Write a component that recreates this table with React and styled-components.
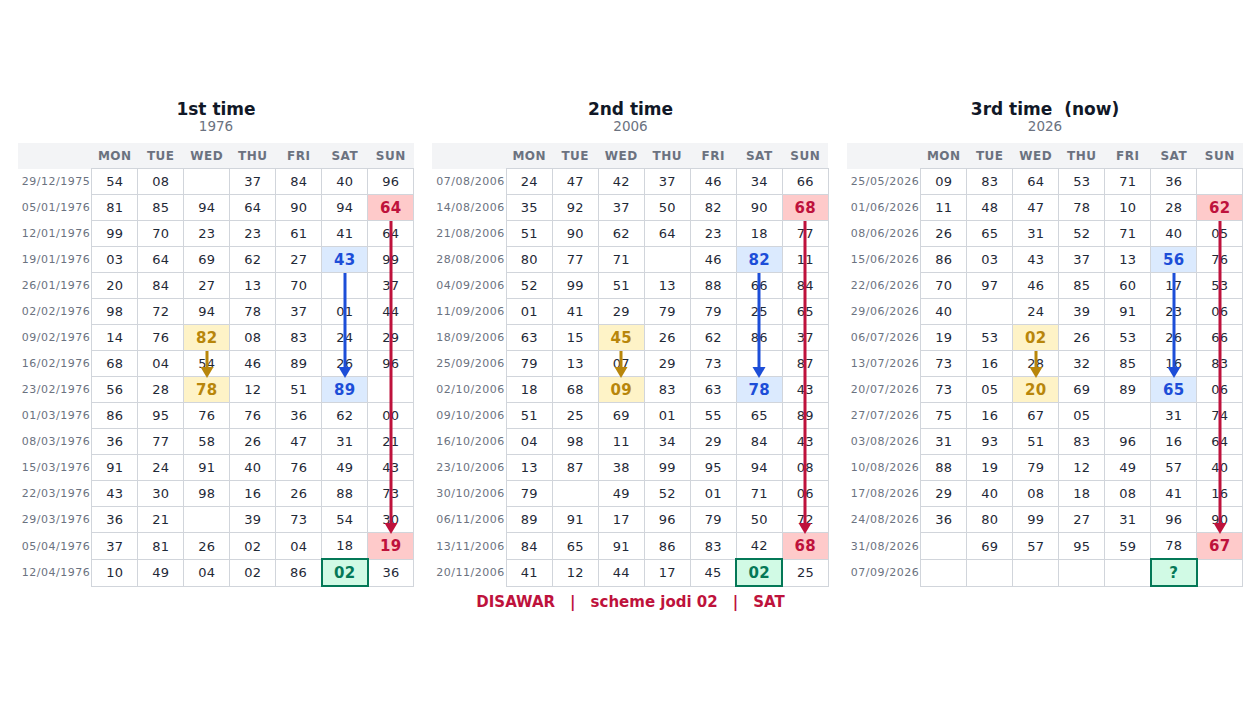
import React from "react";
import styled, { createGlobalStyle } from "styled-components";

const GlobalStyle = createGlobalStyle`
  html, body {
    margin: 0;
    padding: 0;
    background: #ffffff;
    font-family: "DejaVu Sans", "Liberation Sans", sans-serif;
  }
`;

const DAYS = ["MON", "TUE", "WED", "THU", "FRI", "SAT", "SUN"];

const COLORS = {
  red: { bg: "#fecaca", fg: "#be123c", line: "#be123c" },
  blue: { bg: "#dbeafe", fg: "#1d4ed8", line: "#1d4ed8" },
  yellow: { bg: "#fef3c7", fg: "#b8860b", line: "#b8860b" },
  green: { bg: "#d1fae5", fg: "#047857", line: "#047857" },
};

// same cells are marked on all three charts
const MARKS = {
  "1-6": "red",
  "14-6": "red",
  "3-5": "blue",
  "8-5": "blue",
  "6-2": "yellow",
  "8-2": "yellow",
  "15-5": "green",
};

const ARROWS = [
  { col: 6, from: 1, to: 14, color: "red" },
  { col: 5, from: 3, to: 8, color: "blue" },
  { col: 2, from: 6, to: 8, color: "yellow" },
];

const charts = [
  {
    title: "1st time",
    year: "1976",
    rows: [
      ["29/12/1975", "54 08 _ 37 84 40 96"],
      ["05/01/1976", "81 85 94 64 90 94 64"],
      ["12/01/1976", "99 70 23 23 61 41 64"],
      ["19/01/1976", "03 64 69 62 27 43 99"],
      ["26/01/1976", "20 84 27 13 70 _ 37"],
      ["02/02/1976", "98 72 94 78 37 01 44"],
      ["09/02/1976", "14 76 82 08 83 24 29"],
      ["16/02/1976", "68 04 54 46 89 26 96"],
      ["23/02/1976", "56 28 78 12 51 89 _"],
      ["01/03/1976", "86 95 76 76 36 62 00"],
      ["08/03/1976", "36 77 58 26 47 31 21"],
      ["15/03/1976", "91 24 91 40 76 49 43"],
      ["22/03/1976", "43 30 98 16 26 88 73"],
      ["29/03/1976", "36 21 _ 39 73 54 30"],
      ["05/04/1976", "37 81 26 02 04 18 19"],
      ["12/04/1976", "10 49 04 02 86 02 36"],
    ],
  },
  {
    title: "2nd time",
    year: "2006",
    rows: [
      ["07/08/2006", "24 47 42 37 46 34 66"],
      ["14/08/2006", "35 92 37 50 82 90 68"],
      ["21/08/2006", "51 90 62 64 23 18 77"],
      ["28/08/2006", "80 77 71 _ 46 82 11"],
      ["04/09/2006", "52 99 51 13 88 66 84"],
      ["11/09/2006", "01 41 29 79 79 25 65"],
      ["18/09/2006", "63 15 45 26 62 86 37"],
      ["25/09/2006", "79 13 07 29 73 _ 87"],
      ["02/10/2006", "18 68 09 83 63 78 43"],
      ["09/10/2006", "51 25 69 01 55 65 89"],
      ["16/10/2006", "04 98 11 34 29 84 43"],
      ["23/10/2006", "13 87 38 99 95 94 08"],
      ["30/10/2006", "79 _ 49 52 01 71 06"],
      ["06/11/2006", "89 91 17 96 79 50 72"],
      ["13/11/2006", "84 65 91 86 83 42 68"],
      ["20/11/2006", "41 12 44 17 45 02 25"],
    ],
  },
  {
    title: "3rd time\u00a0 (now)",
    year: "2026",
    rows: [
      ["25/05/2026", "09 83 64 53 71 36 _"],
      ["01/06/2026", "11 48 47 78 10 28 62"],
      ["08/06/2026", "26 65 31 52 71 40 05"],
      ["15/06/2026", "86 03 43 37 13 56 76"],
      ["22/06/2026", "70 97 46 85 60 17 53"],
      ["29/06/2026", "40 _ 24 39 91 23 06"],
      ["06/07/2026", "19 53 02 26 53 26 66"],
      ["13/07/2026", "73 16 28 32 85 16 83"],
      ["20/07/2026", "73 05 20 69 89 65 06"],
      ["27/07/2026", "75 16 67 05 _ 31 74"],
      ["03/08/2026", "31 93 51 83 96 16 64"],
      ["10/08/2026", "88 19 79 12 49 57 40"],
      ["17/08/2026", "29 40 08 18 08 41 16"],
      ["24/08/2026", "36 80 99 27 31 96 90"],
      ["31/08/2026", "_ 69 57 95 59 78 67"],
      ["07/09/2026", "_ _ _ _ _ ? _"],
    ],
  },
];

const DATE_W = 74;
const COL_W = 46;
const ROW_H = 26;

const Page = styled.div`
  min-height: 100vh;
  display: flex;
  flex-direction: column;
  align-items: center;
  justify-content: center;
  padding: 0 0 1px 1px;
  box-sizing: border-box;
`;

const Charts = styled.div`
  display: flex;
  gap: 18px;
`;

const Panel = styled.section`
  display: flex;
  flex-direction: column;
  align-items: center;
`;

const Title = styled.h2`
  margin: 4px 0 0;
  font-size: 17px;
  line-height: 17px;
  font-weight: 700;
  color: #111827;
  white-space: pre;
`;

const Year = styled.div`
  font-size: 13.5px;
  line-height: 16px;
  color: #6b7280;
  margin-bottom: 9px;
`;

const TableWrap = styled.div`
  position: relative;
`;

const Table = styled.table`
  border-collapse: collapse;
  table-layout: fixed;
  width: ${DATE_W + COL_W * 7}px;
`;

const HeadRow = styled.tr`
  background: #f3f4f6;
  height: ${ROW_H}px;
`;

const DayHead = styled.th`
  width: ${(p) => (p.$date ? DATE_W : COL_W)}px;
  padding: 0;
  font-size: 12px;
  font-weight: 700;
  letter-spacing: 0.5px;
  color: #6b7280;
  text-align: center;
`;

const Row = styled.tr`
  height: ${ROW_H}px;
`;

const DateCell = styled.td`
  padding: 0 1px 0 0;
  font-size: 11px;
  letter-spacing: 0.5px;
  color: #6b7280;
  text-align: right;
  white-space: nowrap;
`;

const NumCell = styled.td`
  padding: 0;
  height: ${ROW_H - 1}px;
  border: ${(p) => (p.$mark === "green" ? "2px solid #047857" : "1px solid #d1d5db")};
  text-align: center;
  font-size: ${(p) => (p.$mark ? "15px" : "13px")};
  font-weight: ${(p) => (p.$mark ? 700 : 400)};
  letter-spacing: 0.3px;
  color: ${(p) => (p.$mark ? COLORS[p.$mark].fg : "#1f2937")};
  background: ${(p) => (p.$mark ? COLORS[p.$mark].bg : "#ffffff")};
`;

const Overlay = styled.svg`
  position: absolute;
  top: 0;
  left: 0;
  pointer-events: none;
  overflow: visible;
`;

const Footer = styled.div`
  margin-top: 6px;
  display: flex;
  gap: 15px;
  font-size: 15px;
  line-height: 18px;
  font-weight: 700;
  color: #be123c;
`;

function Arrow({ col, from, to, color }) {
  const x = DATE_W + COL_W * col + COL_W / 2;
  const y1 = ROW_H + ROW_H * (from + 1);
  const y2 = ROW_H + ROW_H * to + 1;
  const c = COLORS[color].line;
  return (
    <g>
      <line x1={x} y1={y1} x2={x} y2={y2 - 8} stroke={c} strokeWidth="3" />
      <polygon points={`${x - 6.5},${y2 - 11} ${x + 6.5},${y2 - 11} ${x},${y2}`} fill={c} />
    </g>
  );
}

function Chart({ title, year, rows }) {
  const w = DATE_W + COL_W * 7;
  const h = ROW_H * (rows.length + 1);
  return (
    <Panel>
      <Title>{title}</Title>
      <Year>{year}</Year>
      <TableWrap>
        <Table>
          <thead>
            <HeadRow>
              <DayHead $date />
              {DAYS.map((d) => (
                <DayHead key={d}>{d}</DayHead>
              ))}
            </HeadRow>
          </thead>
          <tbody>
            {rows.map(([date, nums], r) => (
              <Row key={date}>
                <DateCell>{date}</DateCell>
                {nums.split(" ").map((n, c) => (
                  <NumCell key={c} $mark={MARKS[`${r}-${c}`]}>
                    {n === "_" ? "" : n}
                  </NumCell>
                ))}
              </Row>
            ))}
          </tbody>
        </Table>
        <Overlay width={w} height={h} viewBox={`0 0 ${w} ${h}`}>
          {ARROWS.map((a) => (
            <Arrow key={a.color} {...a} />
          ))}
        </Overlay>
      </TableWrap>
    </Panel>
  );
}

export default function App() {
  return (
    <Page>
      <GlobalStyle />
      <Charts>
        {charts.map((ch) => (
          <Chart key={ch.year} {...ch} />
        ))}
      </Charts>
      <Footer>
        <span>DISAWAR</span>
        <span>|</span>
        <span>scheme jodi 02</span>
        <span>|</span>
        <span>SAT</span>
      </Footer>
    </Page>
  );
}
